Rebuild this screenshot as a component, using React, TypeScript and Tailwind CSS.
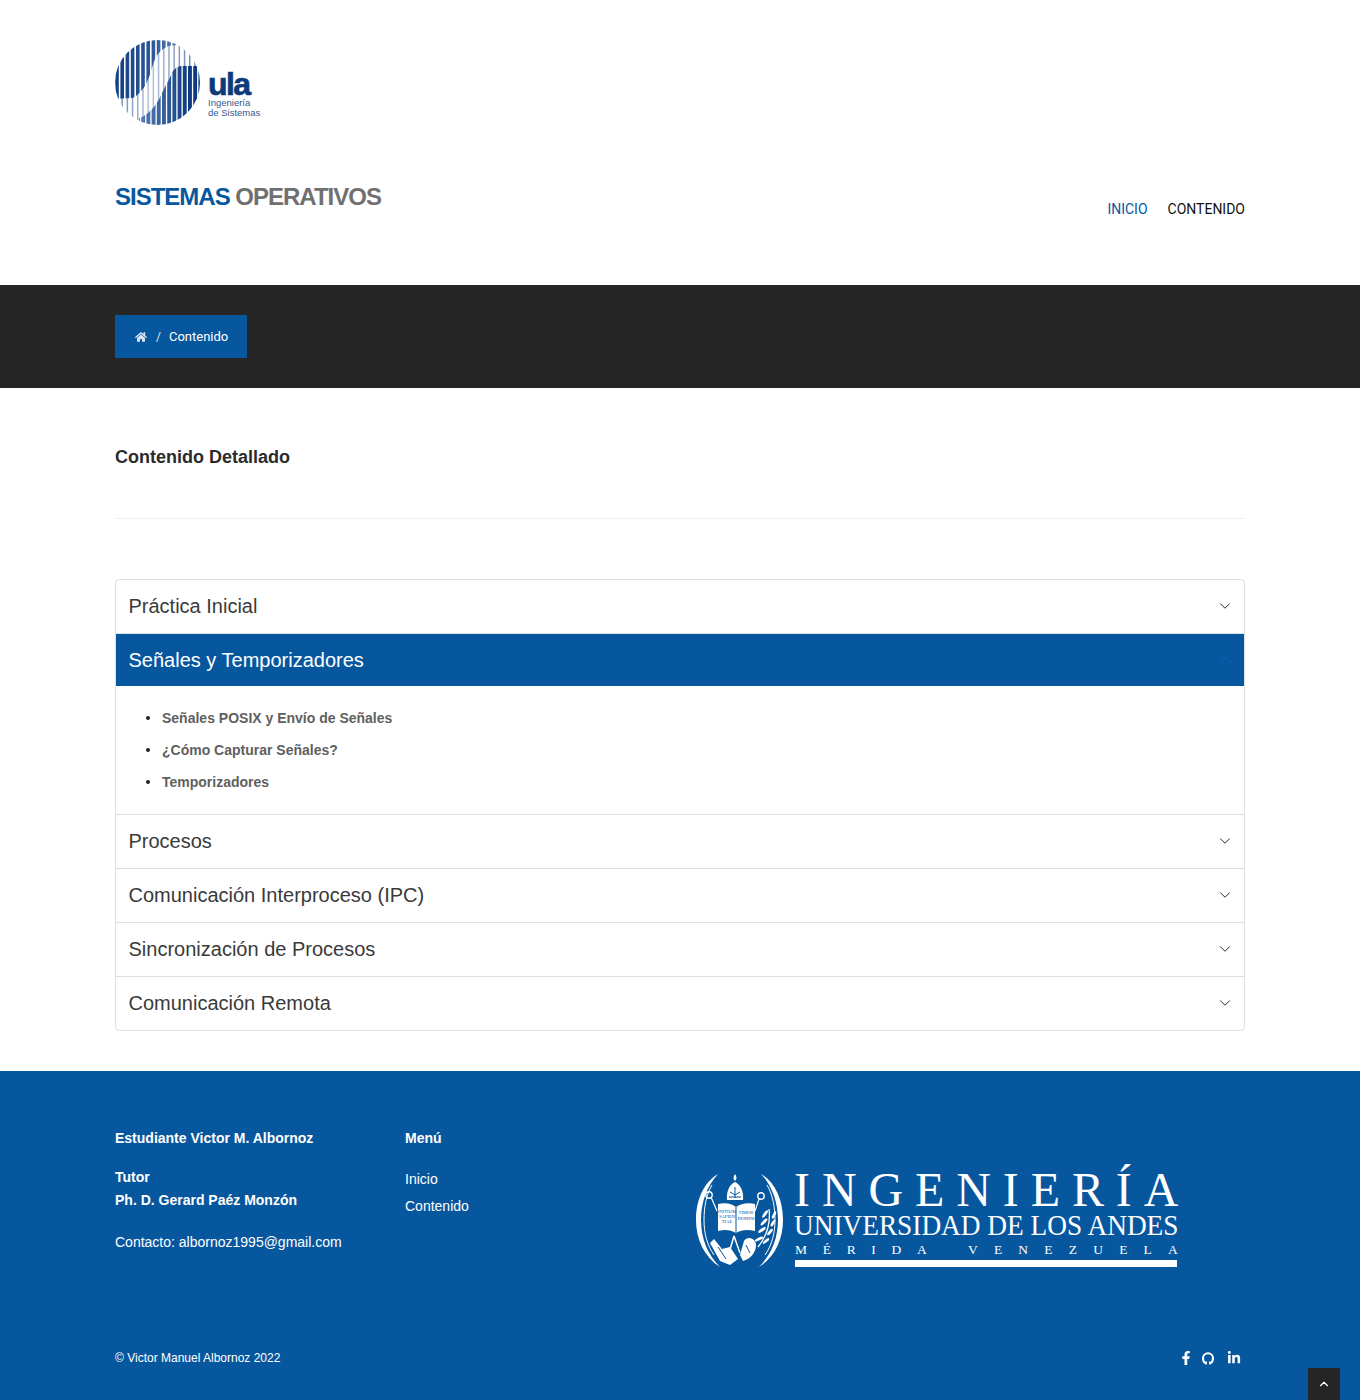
import React from 'react';
import { ChevronDown, ChevronUp } from 'lucide-react';
import { FaHome, FaFacebookF, FaLinkedinIn } from 'react-icons/fa';

const stripes = Array.from({ length: 17 }, (_, i) => i);

const UlaLogo = () => (
  <svg width="85" height="85" viewBox="0 0 85 85" className="block shrink-0">
    <defs>
      <clipPath id="disc"><circle cx="42.5" cy="42.5" r="42.5" /></clipPath>
      <clipPath id="upper"><path d="M-1 -1H86V8C75 6 62 4 54 6C44 10 42 16 40 19C36 30 34 40 30 46C26 52 20 58 17 58L-1 59Z" /></clipPath>
      <clipPath id="lower"><path d="M86 26L65 26C60 28 58 30 57 33C54 40 50 46 47 53C44 60 40 66 37 69C32 74 28 77 24 78L24 90L86 90Z" /></clipPath>
      <linearGradient id="upperFill" x1="0" x2="1" y1="0" y2="0">
        <stop offset="0" stopColor="#123f85" />
        <stop offset="0.4" stopColor="#2a5596" />
        <stop offset="0.7" stopColor="#5479b0" />
      </linearGradient>
      <linearGradient id="lowerFill" x1="0" x2="1" y1="0" y2="0">
        <stop offset="0.25" stopColor="#5c7fb4" />
        <stop offset="0.6" stopColor="#2f5a9a" />
        <stop offset="0.85" stopColor="#0d3a80" />
      </linearGradient>
      <linearGradient id="thinFill" x1="0" x2="1" y1="0" y2="0">
        <stop offset="0" stopColor="#6f88b4" />
        <stop offset="0.4" stopColor="#b7c2d9" />
        <stop offset="1" stopColor="#5f7eb0" />
      </linearGradient>
    </defs>
    <g clipPath="url(#disc)">
      <path fill="url(#thinFill)" d={stripes.map((i) => `M${i * 5.2 + 1.2} 0h1.5v85h-1.5z`).join('')} />
      <g clipPath="url(#upper)">
        <rect x="0" y="0" width="85" height="85" fill="#fff" />
        <path fill="url(#upperFill)" d={stripes.map((i) => `M${i * 5.2 + 0.2} 0h3.6v85h-3.6z`).join('')} />
      </g>
      <g clipPath="url(#lower)">
        <rect x="0" y="0" width="85" height="85" fill="#fff" />
        <path fill="url(#lowerFill)" d={stripes.map((i) => `M${i * 5.2 + 0.2} 0h3.9v85h-3.9z`).join('')} />
      </g>
    </g>
  </svg>
);

const Seal = () => (
  <svg width="87" height="94" viewBox="0 0 87 94" className="block shrink-0" fill="none" stroke="#fff">
    <path d="M22 1C7 10 0 28 0 47C0 66 8 84 24 94C12 82 5 66 5 47C5 29 11 13 22 1Z" fill="#fff" stroke="none" />
    <path d="M65 1C80 10 87 28 87 47C87 66 79 84 63 94C75 82 82 66 82 47C82 29 76 13 65 1Z" fill="#fff" stroke="none" />
    <path d="M16 12C10 22 8 35 8 47C8 60 11 72 18 82" strokeWidth="1" />
    <path d="M71 12C77 22 79 35 79 47C79 60 76 72 69 82" strokeWidth="1" />
    <path d="M39 1C37 4 37 6 39 8C41 6 41 4 39 1Z" fill="#fff" stroke="none" />
    <path d="M31 27C30 18 34 11 39 9C44 11 48 18 47 27Z" fill="#fff" stroke="none" />
    <path d="M34 19L39 22L44 19M39 14V25M33 24H45" stroke="#07579f" strokeWidth="1" />
    <path d="M15 24L21 38M63 26L59 38" strokeWidth="1.2" />
    <circle cx="13" cy="22" r="3.2" strokeWidth="1.4" />
    <circle cx="65" cy="23" r="3.2" strokeWidth="1.4" />
    <path d="M22 31C30 29 36 31 40 34C44 31 52 29 59 31V58C51 56 45 57 40 60C35 57 29 56 22 58Z" fill="#fff" stroke="none" />
    <path d="M40 34V60" stroke="#07579f" strokeWidth="1" />
    <g fill="#07579f" stroke="none" fontFamily="'Liberation Serif',serif" fontSize="4.6" textAnchor="middle">
      <text x="31" y="40">INITIUM</text>
      <text x="31" y="45">SAPIEN</text>
      <text x="31" y="50">TIAE</text>
      <text x="50" y="41">TIMOR</text>
      <text x="50" y="47">DOMINI</text>
    </g>
    <path d="M62 74C70 64 75 52 73 36" strokeWidth="1.3" />
    <g fill="#fff" stroke="none">
      <ellipse cx="69" cy="41" rx="4.5" ry="1.5" transform="rotate(-55 69 41)" />
      <ellipse cx="78" cy="42" rx="4" ry="1.4" transform="rotate(-65 78 42)" />
      <ellipse cx="68" cy="49" rx="4.5" ry="1.5" transform="rotate(-45 68 49)" />
      <ellipse cx="77" cy="50" rx="4" ry="1.4" transform="rotate(-60 77 50)" />
      <ellipse cx="66" cy="57" rx="4.5" ry="1.5" transform="rotate(-35 66 57)" />
      <ellipse cx="74" cy="59" rx="4" ry="1.4" transform="rotate(-50 74 59)" />
      <ellipse cx="63" cy="66" rx="4.5" ry="1.5" transform="rotate(-25 63 66)" />
      <ellipse cx="70" cy="68" rx="4" ry="1.4" transform="rotate(-40 70 68)" />
    </g>
    <path d="M18 66L14 70L24 88L34 92L42 86L34 74L26 76Z" fill="#fff" stroke="none" />
    <path d="M38 63L33 80M38 63L44 80" strokeWidth="1.5" />
    <path d="M48 68C52 62 60 66 60 72C60 80 54 86 47 88L44 82Z" fill="#fff" stroke="none" />
    <path d="M22 74L30 86M50 72L54 80" stroke="#07579f" strokeWidth="1" />
  </svg>
);

const GithubRing = () => (
  <svg width="12" height="13" viewBox="0 0 12 13" className="block" fill="none" stroke="#fff">
    <path d="M3.7 11.4C2 10.6 1 8.6 1 6.3C1 3.4 3.2 1.2 6 1.2C8.8 1.2 11 3.4 11 6.3C11 8.6 10 10.6 8.3 11.4" strokeWidth="2" />
    <path d="M4.2 12.5V9.5M7.8 12.5V9.5" strokeWidth="1.5" />
  </svg>
);

const rowsTop = ['Práctica Inicial'];
const rowsBottom = ['Procesos', 'Comunicación Interproceso (IPC)', 'Sincronización de Procesos', 'Comunicación Remota'];
const links = ['Señales POSIX y Envío de Señales', '¿Cómo Capturar Señales?', 'Temporizadores'];

const Row = ({ title, last }: { title: string; last?: boolean }) => (
  <div className={`flex items-center justify-between pl-[12.5px] pr-[10.5px] ${last ? 'h-[53px]' : 'h-[54px] border-b border-[#dfe0e4]'}`}>
    <span className="pb-[2px] text-[20px] text-[#3a3a3a]">{title}</span>
    <ChevronDown size={18} strokeWidth={1.3} className="-mt-px text-[#212529]" />
  </div>
);

export default function App() {
  return (
    <div className="relative bg-white font-['Liberation_Sans',Arial,sans-serif]">
      <header className="h-[285px] px-[115px] pt-10">
        <div className="flex items-start gap-2">
          <UlaLogo />
          <div className="pt-[30px]">
            <div className="text-[32px] font-bold leading-[28px] tracking-[-1.6px] text-[#0c3b7c] [-webkit-text-stroke:0.7px_#0c3b7c]">ula</div>
            <div className="text-[9.5px] leading-[10px] text-[#35598f]">Ingeniería</div>
            <div className="text-[9.5px] leading-[10px] text-[#35598f]">de Sistemas</div>
          </div>
        </div>
        <div className="mt-[57px] flex items-start justify-between">
          <h1 className="text-[24px] font-bold leading-[30px] tracking-[-1px] text-[#707070]">
            <span className="text-[#07579f]">SISTEMAS</span> OPERATIVOS
          </h1>
          <nav className="mt-[17px] flex gap-5 font-['Roboto',sans-serif] text-[14px] leading-[20px] text-[#111]">
            <span className="text-[#07579f]">INICIO</span>
            <span>CONTENIDO</span>
          </nav>
        </div>
      </header>

      <div className="h-[103px] bg-[#252525] px-[115px] pt-[30px]">
        <div className="flex h-[43px] w-[132px] items-center bg-[#07579f] pl-5 font-['Roboto',sans-serif] text-[13px] text-white">
          <FaHome size={12} className="text-[#dce6f2]" />
          <span className="ml-[9px] mr-[8px] text-[12px] text-[#dce6f2]">/</span>
          <span>Contenido</span>
        </div>
      </div>

      <main className="px-[115px]">
        <h2 className="pt-[58px] text-[18px] font-bold leading-[22px] text-[#2b2b2b]">Contenido Detallado</h2>
        <div className="mt-[50px] border-t border-[#f1f1f3]" />
        <div className="mt-[60px] overflow-hidden rounded border border-[#dfe0e4]">
          {rowsTop.map((t) => <Row key={t} title={t} />)}
          <div className="flex h-[52px] items-center justify-between bg-[#07579f] pl-[12.5px] pr-[10.5px] text-white">
            <span className="text-[20px]">Señales y Temporizadores</span>
            <ChevronUp size={18} strokeWidth={1.3} className="text-[#0f66bd]" />
          </div>
          <ul className="border-b border-[#dfe0e4] pb-4 pl-[46px] pt-4 text-[14px]">
            {links.map((l) => (
              <li key={l} className="relative h-8 font-bold leading-8 text-[#5f5f5f]">
                <span className="absolute left-[-16px] top-[14px] h-[4px] w-[4px] rounded-full bg-[#222]" />
                {l}
              </li>
            ))}
          </ul>
          {rowsBottom.map((t, i) => <Row key={t} title={t} last={i === 3} />)}
        </div>
      </main>

      <footer className="mt-10 h-[329px] bg-[#07579f] px-[115px] text-[14px] text-white">
        <div className="flex h-[278px] items-start">
          <div className="w-[290px] pt-[57px]">
            <p className="font-bold leading-5">Estudiante Victor M. Albornoz</p>
            <p className="mt-[18px] font-bold leading-[23px]">Tutor<br />Ph. D. Gerard Paéz Monzón</p>
            <p className="mt-[20px] leading-5">Contacto: albornoz1995@gmail.com</p>
          </div>
          <div className="w-[290px] pt-[57px]">
            <p className="font-bold leading-5">Menú</p>
            <p className="mt-[21px] leading-5">Inicio</p>
            <p className="mt-[7px] leading-5">Contenido</p>
          </div>
          <div className="ml-px flex items-start gap-[11px] pt-[102px]">
            <Seal />
            <div className="w-[384px] font-['Liberation_Serif',serif]">
              <div className="h-[34px] whitespace-nowrap text-[48px] leading-[34px] tracking-[11.9px]">INGENIERÍA</div>
              <div className="h-[35px] origin-left scale-x-[0.91] whitespace-nowrap text-[30px] leading-[35px]">UNIVERSIDAD DE LOS ANDES</div>
              <div className="flex h-[15px] justify-between pl-px text-[13.5px] leading-[15px]">
                <span className="tracking-[15.7px]">MÉRIDA</span>
                <span className="-mr-[16px] tracking-[16.2px]">VENEZUELA</span>
              </div>
              <div className="ml-px mt-[3px] h-[7px] w-[382px] bg-white" />
            </div>
          </div>
        </div>
        <div className="flex items-center justify-between pr-1">
          <span className="text-[12px]">© Victor Manuel Albornoz 2022</span>
          <div className="flex items-center">
            <FaFacebookF size={14} />
            <span className="ml-[9.5px]"><GithubRing /></span>
            <FaLinkedinIn size={14} className="ml-[13px]" />
          </div>
        </div>
      </footer>

      <div className="absolute bottom-0 right-5 flex h-8 w-8 items-center justify-center bg-[#252525] text-white">
        <ChevronUp size={14} strokeWidth={2} />
      </div>
    </div>
  );
}
